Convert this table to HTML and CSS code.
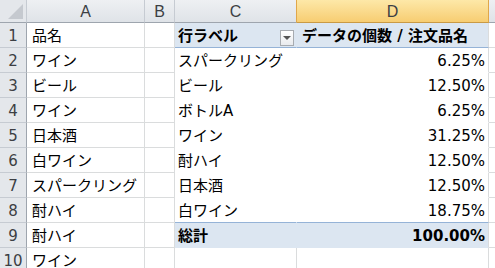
FILE: index.html
```html
<!DOCTYPE html>
<html lang="ja">
<head>
  <meta charset="UTF-8" />
  <title>ピボットテーブル</title>
  <link rel="stylesheet" href="styles.css">
</head>
<body>
  <div class="sheet">
    <!-- column headers -->
    <div class="corner"><span class="corner-mark"></span></div>
    <div class="ch">A</div>
    <div class="ch">B</div>
    <div class="ch ch-before-sel">C</div>
    <div class="ch ch-sel">D</div>
    <div class="ch"></div>

    <!-- row 1 -->
    <div class="rh">1</div>
    <div class="cell">品名</div>
    <div class="cell"></div>
    <div class="cell pv-head pv-left">
      <span>行ラベル</span>
      <span class="filter-btn"><span class="filter-arrow"></span></span>
    </div>
    <div class="cell pv-head">データの個数 / 注文品名</div>
    <div class="cell"></div>

    <!-- row 2 -->
    <div class="rh">2</div>
    <div class="cell">ワイン</div>
    <div class="cell"></div>
    <div class="cell pv pv-left">スパークリング</div>
    <div class="cell pv num">6.25%</div>
    <div class="cell"></div>

    <!-- row 3 -->
    <div class="rh">3</div>
    <div class="cell">ビール</div>
    <div class="cell"></div>
    <div class="cell pv pv-left">ビール</div>
    <div class="cell pv num">12.50%</div>
    <div class="cell"></div>

    <!-- row 4 -->
    <div class="rh">4</div>
    <div class="cell">ワイン</div>
    <div class="cell"></div>
    <div class="cell pv pv-left">ボトルA</div>
    <div class="cell pv num">6.25%</div>
    <div class="cell"></div>

    <!-- row 5 -->
    <div class="rh">5</div>
    <div class="cell">日本酒</div>
    <div class="cell"></div>
    <div class="cell pv pv-left">ワイン</div>
    <div class="cell pv num">31.25%</div>
    <div class="cell"></div>

    <!-- row 6 -->
    <div class="rh">6</div>
    <div class="cell">白ワイン</div>
    <div class="cell"></div>
    <div class="cell pv pv-left">酎ハイ</div>
    <div class="cell pv num">12.50%</div>
    <div class="cell"></div>

    <!-- row 7 -->
    <div class="rh">7</div>
    <div class="cell">スパークリング</div>
    <div class="cell"></div>
    <div class="cell pv pv-left">日本酒</div>
    <div class="cell pv num">12.50%</div>
    <div class="cell"></div>

    <!-- row 8 -->
    <div class="rh">8</div>
    <div class="cell">酎ハイ</div>
    <div class="cell"></div>
    <div class="cell pv pv-left pv-last">白ワイン</div>
    <div class="cell pv num pv-last">18.75%</div>
    <div class="cell"></div>

    <!-- row 9: grand total -->
    <div class="rh">9</div>
    <div class="cell">酎ハイ</div>
    <div class="cell"></div>
    <div class="cell pv-total pv-left">総計</div>
    <div class="cell pv-total num">100.00%</div>
    <div class="cell"></div>

    <!-- row 10 -->
    <div class="rh">10</div>
    <div class="cell">ワイン</div>
    <div class="cell"></div>
    <div class="cell"></div>
    <div class="cell"></div>
    <div class="cell"></div>
  </div>
</body>
</html>
```

FILE: styles.css
```css
body {
  margin: 0;
  background: #fff;
  overflow: hidden;
  font-family: "DejaVu Sans", "Noto Sans CJK JP", sans-serif;
  font-size: 15px;
  color: #000;
}

.sheet {
  display: grid;
  grid-template-columns: 27px 118px 30px 122px 192px 1fr;
  grid-template-rows: 23px;
  grid-auto-rows: 25px;
  width: 495px;
}

.sheet > div {
  box-sizing: border-box;
  display: flex;
  align-items: center;
  white-space: nowrap;
  overflow: hidden;
  line-height: 20px;
}

/* headers */
.corner {
  background: #e4e7eb;
  border-right: 1px solid #c6cbd2;
  border-bottom: 1px solid #9ea5ae;
  justify-content: flex-end;
  align-items: flex-end !important;
}

.corner-mark {
  width: 0;
  height: 0;
  margin: 0 3px 3px 0;
  border-left: 15px solid transparent;
  border-bottom: 15px solid #c5c9cf;
}

.ch {
  justify-content: center;
  background: linear-gradient(#eef0f3, #dfe3e8);
  border-right: 1px solid #c6cbd2;
  border-bottom: 1px solid #9ea5ae;
  color: #3c3f44;
  font-family: "Liberation Sans", sans-serif;
  font-size: 16px;
  padding-top: 1px;
}

.ch-before-sel {
  border-right-color: #e0a74a;
}

.ch-sel {
  background: linear-gradient(#fde8a8, #f7cd72);
  border-right-color: #e0a74a;
  border-bottom-color: #c99a45;
}

.rh {
  justify-content: center;
  background: #e4e7eb;
  border-right: 1px solid #9ea5ae;
  border-bottom: 1px solid #c6cbd2;
  color: #3c3f44;
  padding-top: 2px;
}

/* ordinary cells */
.cell {
  border-right: 1px solid #dadcdd;
  border-bottom: 1px solid #dadcdd;
  padding: 2px 4px 0 5px;
}

.num {
  justify-content: flex-end;
  padding-right: 3px;
}

/* pivot table */
.pv-head {
  background: #dce6f1;
  border-bottom-color: #95b3d7;
  font-weight: bold;
}

.pv-head.pv-left {
  border-right-color: #dce6f1;
  padding-left: 3px;
  justify-content: space-between;
  padding-right: 2px;
}

.pv {
  border-bottom-color: #fff;
}

.pv.pv-left {
  border-right-color: #fff;
  padding-left: 3px;
}

.pv-last {
  border-bottom-color: #95b3d7;
}

.pv-total {
  background: #dce6f1;
  border-bottom-color: #dce6f1;
  font-weight: bold;
}

.pv-total.pv-left {
  border-right-color: #dce6f1;
  padding-left: 3px;
}

.filter-btn {
  box-sizing: border-box;
  width: 14px;
  height: 16px;
  align-self: flex-end;
  margin-bottom: 1px;
  border: 1px solid #a7abb0;
  background: linear-gradient(#ffffff, #e9ebee);
  display: flex;
  align-items: center;
  justify-content: center;
}

.filter-arrow {
  width: 0;
  height: 0;
  border-left: 4px solid transparent;
  border-right: 4px solid transparent;
  border-top: 4px solid #555;
}
```
